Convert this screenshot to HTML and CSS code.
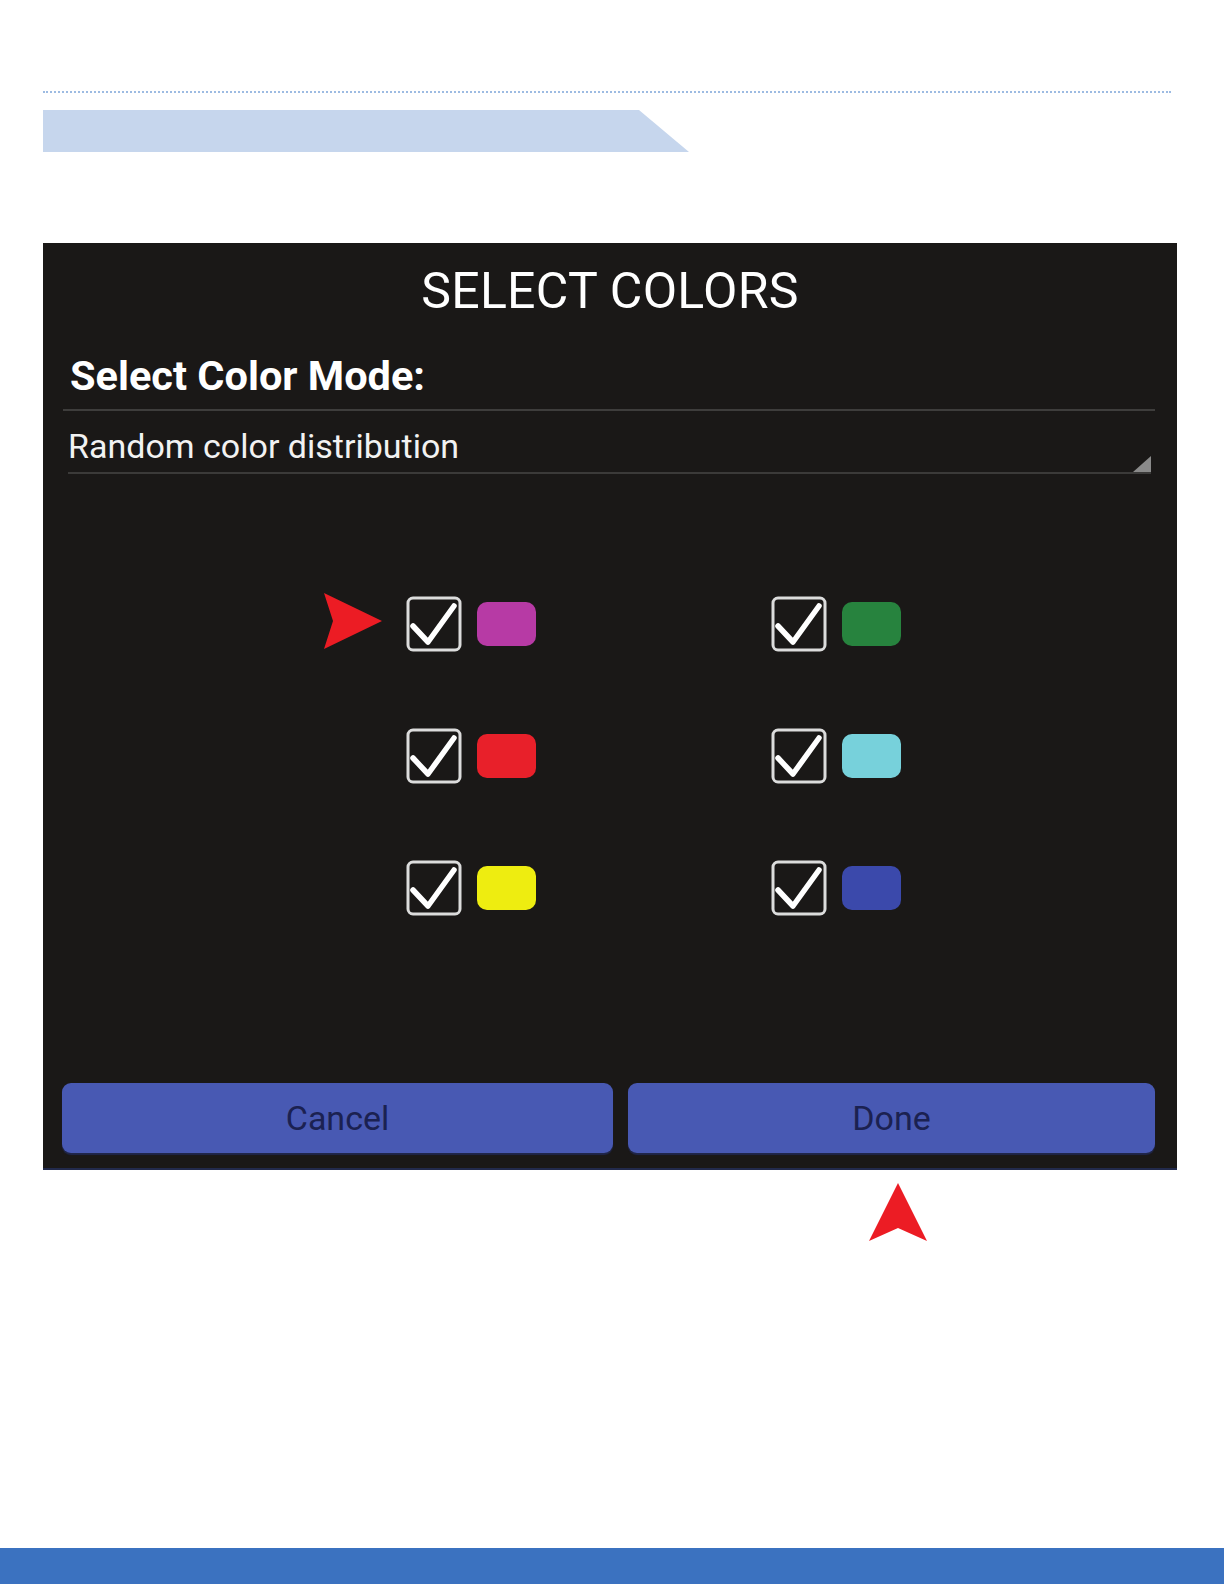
FILE: index.html
```html
<!DOCTYPE html>
<html lang="en">
<head>
    <meta charset="UTF-8">
    <meta name="viewport" content="width=device-width, initial-scale=1.0">
    <title>Select Colors</title>
  <link rel="stylesheet" href="styles.css">
</head>
<body>
    <div class="page">
        <!-- Header decoration -->
        <div class="rule"></div>
        <div class="tab"></div>

        <!-- Dialog screenshot -->
        <div class="dialog">
            <h1 class="title">SELECT COLORS</h1>
            <h2 class="mode-label">Select Color Mode:</h2>
            <div class="divider"></div>
            <div class="spinner">
                <span>Random color distribution</span>
                <span class="spinner-arrow"></span>
            </div>

            <div class="colors">
                <div class="color-item">
                    <svg class="pointer-right" viewBox="0 0 58 56" width="58" height="56">
                        <polygon points="0,0 58,28 0,56 9,28" fill="#ec1c24"/>
                    </svg>
                    <svg class="check" viewBox="0 0 56 56" width="56" height="56">
                        <rect x="2" y="2" width="52" height="52" rx="5" fill="none" stroke="#dcdcdc" stroke-width="3"/>
                        <polyline points="7,30 22,46 48,10" fill="none" stroke="#fff" stroke-width="5.5" stroke-linecap="round" stroke-linejoin="round"/>
                    </svg>
                    <span class="swatch magenta"></span>
                </div>
                <div class="color-item">
                    <svg class="check" viewBox="0 0 56 56" width="56" height="56">
                        <rect x="2" y="2" width="52" height="52" rx="5" fill="none" stroke="#dcdcdc" stroke-width="3"/>
                        <polyline points="7,30 22,46 48,10" fill="none" stroke="#fff" stroke-width="5.5" stroke-linecap="round" stroke-linejoin="round"/>
                    </svg>
                    <span class="swatch green"></span>
                </div>
                <div class="color-item">
                    <svg class="check" viewBox="0 0 56 56" width="56" height="56">
                        <rect x="2" y="2" width="52" height="52" rx="5" fill="none" stroke="#dcdcdc" stroke-width="3"/>
                        <polyline points="7,30 22,46 48,10" fill="none" stroke="#fff" stroke-width="5.5" stroke-linecap="round" stroke-linejoin="round"/>
                    </svg>
                    <span class="swatch red"></span>
                </div>
                <div class="color-item">
                    <svg class="check" viewBox="0 0 56 56" width="56" height="56">
                        <rect x="2" y="2" width="52" height="52" rx="5" fill="none" stroke="#dcdcdc" stroke-width="3"/>
                        <polyline points="7,30 22,46 48,10" fill="none" stroke="#fff" stroke-width="5.5" stroke-linecap="round" stroke-linejoin="round"/>
                    </svg>
                    <span class="swatch cyan"></span>
                </div>
                <div class="color-item">
                    <svg class="check" viewBox="0 0 56 56" width="56" height="56">
                        <rect x="2" y="2" width="52" height="52" rx="5" fill="none" stroke="#dcdcdc" stroke-width="3"/>
                        <polyline points="7,30 22,46 48,10" fill="none" stroke="#fff" stroke-width="5.5" stroke-linecap="round" stroke-linejoin="round"/>
                    </svg>
                    <span class="swatch yellow"></span>
                </div>
                <div class="color-item">
                    <svg class="check" viewBox="0 0 56 56" width="56" height="56">
                        <rect x="2" y="2" width="52" height="52" rx="5" fill="none" stroke="#dcdcdc" stroke-width="3"/>
                        <polyline points="7,30 22,46 48,10" fill="none" stroke="#fff" stroke-width="5.5" stroke-linecap="round" stroke-linejoin="round"/>
                    </svg>
                    <span class="swatch blue"></span>
                </div>
            </div>

            <div class="buttons">
                <button class="btn btn-cancel">Cancel</button>
                <button class="btn btn-done">Done</button>
            </div>
        </div>

        <!-- Pointer under the Done button -->
        <svg class="pointer-up" viewBox="0 0 58 58" width="58" height="58">
            <polygon points="29,0 58,58 29,45 0,58" fill="#ec1c24"/>
        </svg>
    </div>

    <div class="footer"></div>
</body>
</html>
```

FILE: styles.css
```css
/* General Reset */
* {
    margin: 0;
    padding: 0;
    box-sizing: border-box;
}

body {
    font-family: Roboto, "Liberation Sans", sans-serif;
    background-color: #fff;
    min-height: 100vh;
    display: flex;
    flex-direction: column;
}

.page {
    padding: 91px 0 0 43px;
    display: flex;
    flex-direction: column;
    align-items: flex-start;
}

/* Header decoration */
.rule {
    width: 1128px;
    border-top: 2px dotted #9dbbe2;
}

.tab {
    margin-top: 17px;
    width: 646px;
    height: 42px;
    background-color: #c6d6ed;
    clip-path: polygon(0 0, 596px 0, 100% 100%, 0 100%);
}

/* Dialog */
.dialog {
    margin-top: 91px;
    width: 1134px;
    height: 927px;
    background-color: #1a1817;
    display: flex;
    flex-direction: column;
    padding-bottom: 15px;
    border-bottom: 2px solid #222a4c;
}

.title {
    margin-top: 19px;
    font-size: 50px;
    line-height: 58px;
    font-weight: 400;
    letter-spacing: 0.3px;
    color: #fff;
    text-align: center;
}

.mode-label {
    margin: 32px 0 0 27px;
    font-size: 41.5px;
    line-height: 48px;
    font-weight: 700;
    color: #fff;
}

.divider {
    margin: 9px 22px 0 20px;
    height: 2px;
    background-color: #3e3d3c;
}

.spinner {
    position: relative;
    margin: 14px 26px 0 25px;
    padding-bottom: 5px;
    border-bottom: 2px solid #3b3a39;
    font-size: 34px;
    line-height: 42px;
    color: #f2f2f2;
}

.spinner-arrow {
    position: absolute;
    right: 0;
    bottom: 0;
    width: 18px;
    height: 16px;
    background-color: #8a8a8a;
    clip-path: polygon(100% 0, 100% 100%, 0 100%);
}

/* Color grid */
.colors {
    margin: 122px 0 0 363px;
    display: grid;
    grid-template-columns: repeat(2, 131px);
    column-gap: 234px;
    row-gap: 76px;
}

.color-item {
    position: relative;
    display: flex;
    align-items: center;
    gap: 15px;
}

.check {
    display: block;
}

.swatch {
    width: 59px;
    height: 44px;
    border-radius: 10px;
}

.magenta { background-color: #b73aa5; }
.green   { background-color: #27833e; }
.red     { background-color: #e8202a; }
.cyan    { background-color: #77d1db; }
.yellow  { background-color: #eeed10; }
.blue    { background-color: #3b49ab; }

.pointer-right {
    position: absolute;
    left: -82px;
    top: -3px;
}

/* Buttons */
.buttons {
    margin: auto 22px 0 19px;
    display: flex;
    gap: 15px;
}

.btn {
    height: 70px;
    border: none;
    border-radius: 9px;
    background-color: #4859b3;
    color: #1b2151;
    font-family: Roboto, "Liberation Sans", sans-serif;
    font-size: 34px;
    box-shadow: 0 2px 1px #20264a;
}

.btn-cancel {
    width: 551px;
}

.btn-done {
    flex: 1;
}

.pointer-up {
    margin: 13px 0 0 826px;
}

.footer {
    margin-top: auto;
    height: 36px;
    background-color: #3b72c0;
}
```
